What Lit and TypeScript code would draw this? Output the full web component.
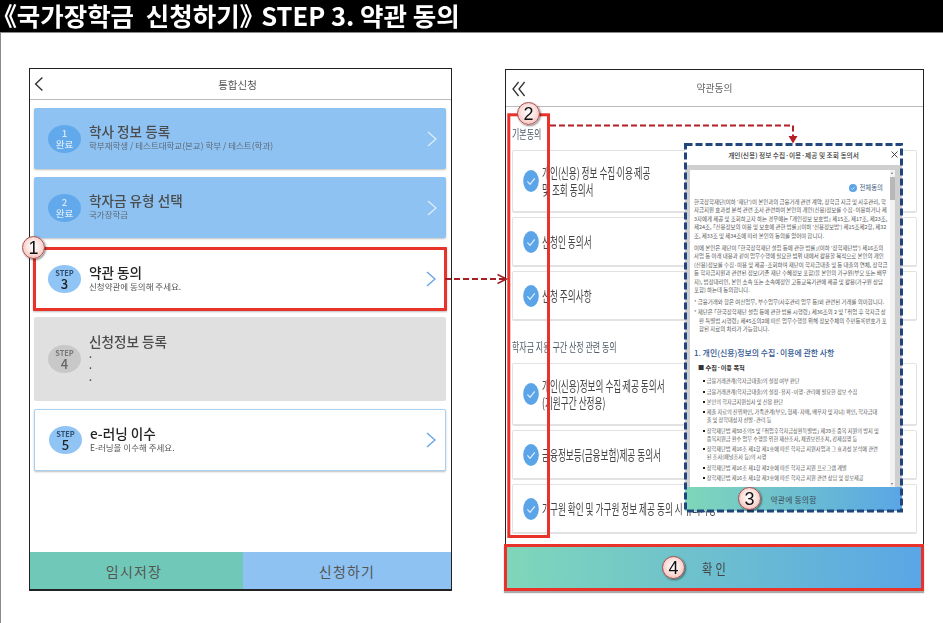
import { LitElement, html, css, svg } from "lit";
import { customElement } from "lit/decorators.js";

const check = html`<svg class="chk" viewBox="0 0 16 22" width="16" height="22"><ellipse cx="8" cy="11" rx="7.8" ry="11" fill="#5ba4e8"/><path d="M4.4 11.4 7 14.4 11.8 8.4" fill="none" stroke="#e4f0fc" stroke-width="1.2"/></svg>`;
const chevron = html`<svg class="chev" viewBox="0 0 10 16" width="10" height="16"><path d="M1 1 9 8 1 15" fill="none" stroke="currentColor" stroke-width="1.3"/></svg>`;
const dot = html`<span class="p d">·</span>`;

@customElement("app-root")
export class AppRoot extends LitElement {
  static styles = css`
    :host { display: block; width: 943px; height: 623px; overflow: hidden; background: #fff;
      font-family: "Noto Sans CJK KR", "Noto Sans", sans-serif; color: #444; }
    * { box-sizing: border-box; }
    .p { font-feature-settings: "palt"; }
    .d { letter-spacing: -4px; margin-left: -1px; }
    .page { position: relative; width: 943px; height: 623px; display: flex; flex-direction: column; filter: blur(.35px); background: #fff; }
    .title { height: 33px; flex: none; background: #000; color: #fff; font-size: 25.5px; font-weight: 700; line-height: 29px;
      padding-left: 4px; white-space: pre; border-bottom: 1px solid #888; }
    .title .w { word-spacing: 6px; }
    .title .e { margin-right: 3px; }
    .stage { flex: 1; display: flex; align-items: flex-start; border-left: 1px solid #8a8a8a; padding: 35px 0 0 28px; }

    .phone { width: 423px; height: 523px; border: 1px solid #222; border-bottom-width: 2px; display: flex; flex-direction: column; flex: none; }
    .bar { height: 31px; flex: none; border-bottom: 1px solid #bbb; display: flex; align-items: center; justify-content: center; position: relative; font-size: 10.5px; color: #555; padding-right: 6px; }
    .back { position: absolute; left: 4px; top: 7px; }
    .list { display: flex; flex-direction: column; gap: 8px; padding: 8px 5px 0 4px; }
    .card { height: 61px; border-radius: 2px; display: flex; align-items: center; padding: 0 9px 0 14px; box-shadow: 0 1px 2px rgba(0,0,0,.25); flex: none; }
    .card.blue { background: #8ec2f2; color: #62a3e8; }
    .card.blue .chev { color: #dcecfb; }
    .card.cur { height: 64px; margin: 1px -1px -2px -1px; background: #fff; border: 3px solid #e8322a; border-radius: 1px; padding: 0 8px 0 12px; color: #62a3e8; }
    .card.grey { height: 84px; background: #e0e0e0; box-shadow: none; }
    .card.line { height: 62px; background: #fff; border: 1px solid #a9d0f3; color: #62a3e8; padding-left: 14px; }
    .step { width: 33px; height: 28px; border-radius: 50%; background: #62a9ec; color: #d8e9fa; flex: none; display: flex; flex-direction: column; align-items: center; justify-content: center; line-height: 11px; font-size: 9.6px; font-weight: 500; }
    .step.s { background: #90c4f4; color: #2f4f6e; }
    .step.s small { font-size: 7.4px; line-height: 9px; font-weight: 700; }
    .step.s b { font-size: 13px; line-height: 14px; font-weight: 500; color: #222; }
    .step.g { background: #c8c8c8; color: #777; }
    .step.g b { color: #666; }
    .txt { margin-left: 8px; flex: 1; min-width: 0; padding-bottom: 2px; }
    .txt h3 { margin: 0; font-size: 13.6px; line-height: 16px; font-weight: 500; color: #4b4b4b; }
    .cur h3, .line h3 { color: #222; }
    .txt p { margin: 0; font-size: 8.5px; line-height: 13px; color: #5d6a78; white-space: nowrap; }
    .cur p, .line p { color: #555; }
    .dots { font-size: 9px; line-height: 11.6px; font-weight: 700; color: #444; }
    .foot { margin-top: auto; display: flex; height: 37px; flex: none; }
    .foot div { flex: 1; display: flex; align-items: center; justify-content: center; font-size: 14px; letter-spacing: 1.2px; color: #555; }
    .foot .a { background: #70c9b8; padding-right: 5px; }
    .foot .b { background: #8ec2f2; }

    .right { margin-left: 53px; width: 419px; flex: none; display: flex; flex-direction: column; margin-top: 1px; }
    .phone2 { height: 475px; border: 1px solid #222; border-bottom: none; display: flex; flex-direction: column; }
    .bar2 { height: 37px; flex: none; border-bottom: 1px solid #bbb; display: flex; align-items: center; justify-content: center; position: relative; font-size: 9.8px; color: #666; }
    .back2 { position: absolute; left: 6px; top: 11px; }
    .body2 { padding: 0 6px; display: flex; flex-direction: column; }
    .sect { height: 43px; flex: none; display: flex; align-items: flex-end; padding: 0 0 8.5px 0; }
    .sect.next { height: 38px; padding-bottom: 8.5px; }
    .row { flex: none; height: 50px; margin-bottom: 4px; border: 1px solid #e2e2e2; border-bottom-width: 2px; border-radius: 2px; background: #fff; display: flex; align-items: center; padding-left: 10px; gap: 2.5px; }
    .row.tall { height: 63px; }
    .sx { display: block; transform: scaleX(.64); transform-origin: left center; white-space: nowrap; font-size: 13.5px; line-height: 17px; color: #444; }
    .sect .sx { font-size: 12.5px; color: #4e5a68; }
    .ok { height: 47px; margin: 0 0 0 -1px; flex: none; background: linear-gradient(90deg, #7fd7b9, #5aa6e6); border: 3px solid #e8322a; box-shadow: 0 2px 1px #aaa; display: flex; align-items: center; justify-content: center; font-size: 14px; color: #444; }
    .ok span { display: block; transform: scaleX(.8); word-spacing: 1px; }

    .modal { position: absolute; left: 685px; top: 144px; width: 217px; height: 367px; background: #fff; display: flex; flex-direction: column; }
    .mh { height: 21px; flex: none; display: flex; align-items: center; justify-content: center; font-size: 6.7px; font-weight: 500; color: #333; position: relative; font-feature-settings: "palt"; }
    .x { position: absolute; right: 4px; top: 7px; width: 7px; height: 7px; display: block; }
    .mb { height: 322px; flex: none; background: #cfcfcf; padding: 5px 7px 0 5px; }
    .doc { height: 100%; background: #fff; position: relative; overflow: hidden; padding: 10px 0 0 4px; font-size: 5.45px; line-height: 8.5px; color: #555; white-space: nowrap; font-feature-settings: "palt"; }
    .all { display: flex; justify-content: flex-end; align-items: center; gap: 2.5px; font-size: 6.4px; color: #3d5a80; height: 11px; margin: 2.5px 12px 4px 0; }
    .all svg { display: block; }
    .doc p { margin: 0 0 3.6px; }
    .doc p.note { padding-left: 5px; text-indent: -5px; margin-bottom: 1.5px; }
    .doc h4 { margin: 12px 0 4px; font-size: 7.9px; line-height: 13px; font-weight: 500; color: #2e5590; }
    .doc h5 { margin: 0 0 4.6px 4px; font-size: 6.2px; line-height: 10px; font-weight: 700; color: #333; }
    .doc ul { list-style: none; margin: 0; padding: 0 0 0 8.7px; }
    .doc li { position: relative; padding-left: 4px; font-size: 5.2px; line-height: 8.2px; margin-bottom: 2.1px; color: #555; }
    .doc li::before { content: ""; position: absolute; left: 0; top: 3px; width: 2px; height: 2px; background: #222; }
    .sb { position: absolute; right: 0; top: 0; bottom: 0; width: 5px; background: #f1f1f1; }
    .sb i { position: absolute; left: 0; top: 7px; width: 5px; height: 23px; background: #b8b8b8; display: block; }
    .sb::before, .sb::after { content: ""; position: absolute; left: 1px; border-left: 1.5px solid transparent; border-right: 1.5px solid transparent; }
    .sb::before { top: 2px; border-bottom: 2px solid #777; }
    .sb::after { bottom: 2px; border-top: 2px solid #777; }
    .mf { flex: 1; background: linear-gradient(90deg, #7fd7b9, #5aa6e6); display: flex; align-items: center; justify-content: center; font-size: 7.8px; letter-spacing: .2px; color: #3e4a55; }

    .over { position: absolute; left: 0; top: 0; pointer-events: none; }
    .badge { position: absolute; width: 23px; height: 23px; border-radius: 50%; border: 1px solid #a8504e; background: radial-gradient(circle at 50% 45%, #fff 0%, #fbe3e0 45%, #f0a8a2 100%); box-shadow: 1px 1px 2px rgba(0,0,0,.45); display: flex; align-items: center; justify-content: center; color: #111; font-size: 18px; line-height: 1; font-family: "Liberation Sans", sans-serif; }
    .b1 { left: 22px; top: 236px; }
    .b2 { left: 517px; top: 102px; }
    .b3 { left: 738px; top: 487px; }
    .b4 { left: 662px; top: 556px; }
  `;

  private overlay() {
    return svg`
      <rect x="508.8" y="114.8" width="39.7" height="421.7" fill="none" stroke="#e8322a" stroke-width="3"/>
      <rect x="685.5" y="144.5" width="216" height="366.5" fill="none" stroke="#22457c" stroke-width="3" stroke-dasharray="7 3"/>
      <path d="M550 125.5H793V137" fill="none" stroke="#b32025" stroke-width="2" stroke-dasharray="6 3"/>
      <path d="M788.5 136H797.5L793 143.5Z" fill="#b32025"/>
      <path d="M445 279H505" fill="none" stroke="#a52025" stroke-width="2" stroke-dasharray="6 3"/>
      <path d="M497.5 274.5 506.5 279 497.5 283.5" fill="none" stroke="#a52025" stroke-width="1.5"/>
    `;
  }

  render() {
    return html`<div class="page">
      <div class="title"><span class="p">《</span><span class="w">국가장학금 신청하기</span><span class="p e">》</span> STEP 3. 약관 동의</div>
      <div class="stage">
        <section class="phone">
          <div class="bar"><svg class="back" viewBox="0 0 10 16" width="10" height="16"><path d="M8.4 1.6 1.6 8l6.8 6.4" fill="none" stroke="#333" stroke-width="1.4"/></svg>통합신청</div>
          <div class="list">
            <div class="card blue"><div class="step"><span>1</span><span>완료</span></div><div class="txt"><h3>학사 정보 등록</h3><p>학부재학생 / 테스트대학교(본교) 학부 / 테스트(학과)</p></div>${chevron}</div>
            <div class="card blue"><div class="step"><span>2</span><span>완료</span></div><div class="txt"><h3>학자금 유형 선택</h3><p>국가장학금</p></div>${chevron}</div>
            <div class="card cur"><div class="step s"><small>STEP</small><b>3</b></div><div class="txt"><h3>약관 동의</h3><p>신청약관에 동의해 주세요.</p></div>${chevron}</div>
            <div class="card grey"><div class="step s g"><small>STEP</small><b>4</b></div><div class="txt"><h3>신청정보 등록</h3><div class="dots">.<br>.<br>.</div></div></div>
            <div class="card line"><div class="step s"><small>STEP</small><b>5</b></div><div class="txt"><h3>e-러닝 이수</h3><p>E-러닝을 이수해 주세요.</p></div>${chevron}</div>
          </div>
          <div class="foot"><div class="a">임시저장</div><div class="b">신청하기</div></div>
        </section>
        <section class="right">
          <div class="phone2">
            <div class="bar2"><svg class="back2" viewBox="0 0 14 16" width="14" height="16"><path d="M6.6 1 1 8l5.6 7M12.6 1 7 8l5.6 7" fill="none" stroke="#333" stroke-width="1.3"/></svg>약관동의</div>
            <div class="body2">
              <div class="sect"><span class="sx">기본동의</span></div>
              <div class="row tall">${check}<span class="sx">개인(신용) 정보 수집${dot}이용${dot}제공<br>및 조회 동의서</span></div>
              <div class="row">${check}<span class="sx">신청인 동의서</span></div>
              <div class="row">${check}<span class="sx">신청 주의사항</span></div>
              <div class="sect next"><span class="sx">학자금 지원 구간 산정 관련 동의</span></div>
              <div class="row tall">${check}<span class="sx">개인(신용)정보의 수집${dot}제공 동의서<br>(지원구간 산정용)</span></div>
              <div class="row">${check}<span class="sx">금융정보등(금융보험)제공 동의서</span></div>
              <div class="row">${check}<span class="sx">가구원 확인 및 가구원 정보 제공 동의 시 유의사항</span></div>
            </div>
          </div>
          <div class="ok"><span>확 인</span></div>
        </section>
      </div>

      <div class="modal">
        <div class="mh">개인(신용) 정보 수집·이용·제공 및 조회 동의서<svg class="x" viewBox="0 0 7 7"><path d="M.5.5l6 6M6.5.5l-6 6" stroke="#333" stroke-width=".9" fill="none"/></svg></div>
        <div class="mb"><div class="doc">
          <div class="all"><svg viewBox="0 0 8 8" width="8" height="8"><circle cx="4" cy="4" r="4" fill="#5ba4e8"/><path d="M2.2 4.2 3.6 5.6 5.9 2.8" fill="none" stroke="#e4f0fc" stroke-width=".7"/></svg>전체동의</div>
          <p>한국장학재단(이하 '재단')이 본인과의 금융거래 관련 계약, 장학금 지급 및 사후관리, 학<br>자금지원 효과성 분석 관련 조사 관련하여 본인의 개인(신용)정보를 수집·이용하거나 제<br>3자에게 제공 및 조회하고자 하는 경우에는 「개인정보 보호법」 제15조, 제17조, 제23조,<br>제24조, 「신용정보의 이용 및 보호에 관한 법률」(이하 '신용정보법') 제15조제2항, 제32<br>조, 제33조 및 제34조에 따라 본인의 동의를 얻어야 합니다.</p>
          <p>이에 본인은 재단이 「한국장학재단 설립 등에 관한 법률」(이하 '장학재단법') 제16조의<br>사업 등 아래 내용과 같이 업무수행에 필요한 범위 내에서 활용할 목적으로 본인의 개인<br>(신용)정보를 수집·이용 및 제공·조회하며 재단이 학자금대출 및 등 대출의 연체, 장학금<br>등 학자금지원과 관련된 정보(기존 재단 수혜정보 포함)을 본인의 가구원(부모 또는 배우<br>자), 법정대리인, 본인 소속 또는 소속예정인 고등교육기관에 제공 및 활용(가구원 상담<br>포함) 하는데 동의합니다.</p>
          <p class="note">* 금융거래와 항은 여신업무, 부수업무(사후관리 업무 등)와 관련된 거래를 의미합니다.</p>
          <p class="note">* 재단은 「한국장학재단 설립 등에 관한 법률 시행령」 제36조의 2 및 「취업 후 학자금 상<br>환 특별법 시행령」 제45조의2에 따른 업무수행을 위해 정보주체의 주민등록번호가 포<br>함된 자료의 처리가 가능합니다.</p>
          <h4>1. 개인(신용)정보의 수집·이용에 관한 사항</h4>
          <h5>■ 수집·이용 목적</h5>
          <ul>
            <li>금융거래관계(학자금대출)의 설정 여부 판단</li>
            <li>금융거래관계(학자금대출)의 설정·유지·이행·관리에 필요한 정보 수집</li>
            <li>본인의 학자금지원심사 및 신용 판단</li>
            <li>제출 자료의 진위확인, 가족관계(부모, 형제·자매, 배우자 및 자녀) 확인, 학자금대<br>출 및 장학대상자 선발·관리 등</li>
            <li>장학재단법 제50조의5 및 「취업후학자금상환특별법」 제39조 중복 지원의 방지 및<br>중복지원금 환수 업무 수행을 위한 재산조사, 채권보전조치, 강제집행 등</li>
            <li>장학재단법 제16조 제1항 제1호에 따른 학자금 지원사업과 그 효과성 분석에 관련<br>된 조사(패널조사 등)의 시행</li>
            <li>장학재단법 제16조 제1항 제2호에 따른 학자금 지원 프로그램 개발</li>
            <li>장학재단법 제16조 제1항 제3호에 따른 학자금 지원 관련 상담 및 정보제공</li>
          </ul>
          <div class="sb"><i></i></div>
        </div></div>
        <div class="mf">약관에 동의함</div>
      </div>

      <svg class="over" width="943" height="623" viewBox="0 0 943 623">${this.overlay()}</svg>
      <div class="badge b1">1</div>
      <div class="badge b2">2</div>
      <div class="badge b3">3</div>
      <div class="badge b4">4</div>
    </div>`;
  }
}
